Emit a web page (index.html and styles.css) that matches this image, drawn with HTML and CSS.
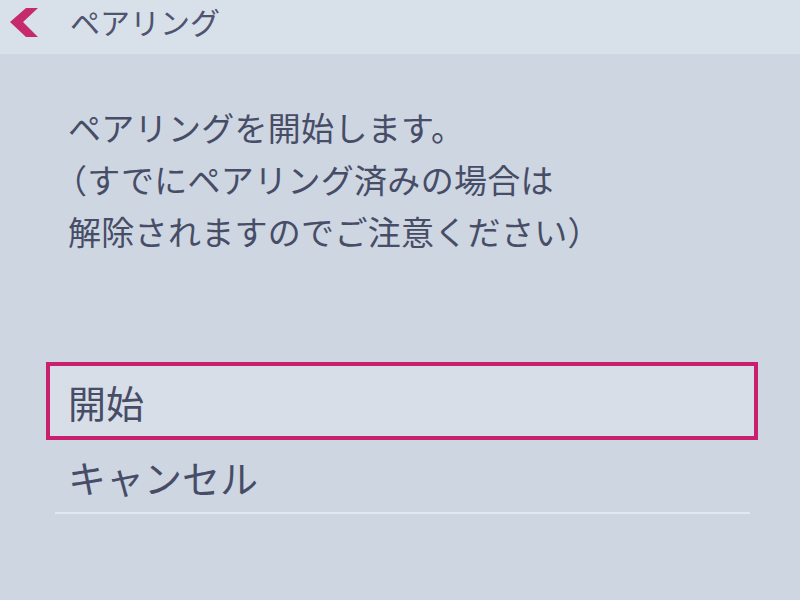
FILE: index.html
```html
<!DOCTYPE html>
<html lang="ja">
<head>
<meta charset="utf-8">
<title>ペアリング</title>
<link rel="stylesheet" href="styles.css">
</head>
<body>
<div class="screen">
  <header class="topbar">
    <svg class="back" width="40" height="46" viewBox="0 0 40 46" aria-hidden="true">
      <polygon points="10,22 26,8 38,8 23,22 38,37 26,37" fill="#c42a6c"/>
    </svg>
    <h1 class="title">ペアリング</h1>
  </header>
  <main class="content">
    <p class="message">
      <span class="line">ペアリングを開始します。</span>
      <span class="line open">（すでにペアリング済みの場合は</span>
      <span class="line">解除されますのでご注意ください）</span>
    </p>
    <ul class="menu">
      <li class="item selected">開始</li>
      <li class="item">キャンセル</li>
    </ul>
    <div class="divider"></div>
  </main>
</div>
</body>
</html>
```

FILE: styles.css
```css
* { box-sizing: border-box; }
html, body {
  margin: 0;
  padding: 0;
  width: 800px;
  height: 600px;
  overflow: hidden;
}
body {
  background: #cdd6e1;
  color: #474c67;
  font-family: "Noto Sans CJK JP", "Noto Sans", sans-serif;
}
.screen {
  display: flex;
  flex-direction: column;
  height: 600px;
}
.topbar {
  height: 54px;
  flex: none;
  background: #d8e0e9;
  display: flex;
  align-items: flex-start;
}
.back {
  flex: none;
}
.title {
  margin: -1px 0 0 30px;
  font-size: 30px;
  line-height: 44px;
  font-weight: 400;
  color: #4f5470;
}
.content {
  flex: 1;
  display: flex;
  flex-direction: column;
}
.message {
  margin: 47px 0 0 68px;
  font-size: 33px;
  line-height: 52px;
  letter-spacing: 0.3px;
}
.line {
  display: block;
}
.open {
  margin-left: -14px;
}
.menu {
  list-style: none;
  margin: 105px 0 0 46px;
  padding: 0;
  width: 712px;
}
.item {
  height: 78px;
  display: flex;
  align-items: center;
  padding-left: 18px;
  font-size: 38px;
  border: 4px solid transparent;
}
.item + .item {
  height: 72px;
}
.selected {
  border-color: #c8206e;
  background: #d7dee7;
}
.divider {
  margin: 0 0 0 55px;
  width: 695px;
  height: 2px;
  background: #e2e8ef;
}
```
